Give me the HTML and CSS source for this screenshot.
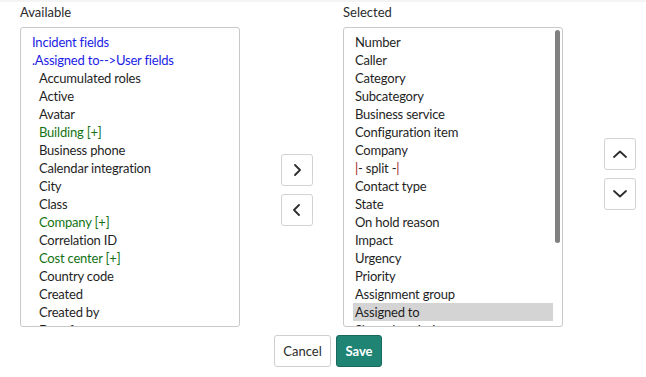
FILE: index.html
```html
<!DOCTYPE html>
<html lang="en">
<head>
  <meta charset="UTF-8" />
  <title>Configure List Layout</title>
  <link rel="stylesheet" href="styles.css">
</head>
<body>
  <div class="slush">
    <div class="columns">
      <!-- Available fields -->
      <div class="col">
        <label class="col-label">Available</label>
        <div class="list list-left">
          <div class="opt group">Incident fields</div>
          <div class="opt group">.Assigned to--&gt;User fields</div>
          <div class="opt sub">Accumulated roles</div>
          <div class="opt sub">Active</div>
          <div class="opt sub">Avatar</div>
          <div class="opt sub ref">Building [+]</div>
          <div class="opt sub">Business phone</div>
          <div class="opt sub">Calendar integration</div>
          <div class="opt sub">City</div>
          <div class="opt sub">Class</div>
          <div class="opt sub ref">Company [+]</div>
          <div class="opt sub">Correlation ID</div>
          <div class="opt sub ref">Cost center [+]</div>
          <div class="opt sub">Country code</div>
          <div class="opt sub">Created</div>
          <div class="opt sub">Created by</div>
          <div class="opt sub">Date format</div>
        </div>
      </div>

      <div class="mover">
        <button class="icon-btn" title="Add">
          <svg width="10" height="12" viewBox="0 0 10 12"><path d="M3 1 L8 6 L3 11" /></svg>
        </button>
        <button class="icon-btn" title="Remove">
          <svg width="10" height="12" viewBox="0 0 10 12"><path d="M7 1 L2 6 L7 11" /></svg>
        </button>
      </div>

      <!-- Selected fields -->
      <div class="col">
        <label class="col-label">Selected</label>
        <div class="list list-right">
          <div class="opt">Number</div>
          <div class="opt">Caller</div>
          <div class="opt">Category</div>
          <div class="opt">Subcategory</div>
          <div class="opt">Business service</div>
          <div class="opt">Configuration item</div>
          <div class="opt">Company</div>
          <div class="opt"><span class="pipe">|</span>- split -<span class="pipe">|</span></div>
          <div class="opt">Contact type</div>
          <div class="opt">State</div>
          <div class="opt">On hold reason</div>
          <div class="opt">Impact</div>
          <div class="opt">Urgency</div>
          <div class="opt">Priority</div>
          <div class="opt">Assignment group</div>
          <div class="opt selected">Assigned to</div>
          <div class="opt">Short description</div>
          <div class="scroll-thumb"></div>
        </div>
      </div>

      <div class="order">
        <button class="icon-btn" title="Move up">
          <svg width="14" height="8" viewBox="0 0 14 8"><path d="M1 7 L7 1.5 L13 7" /></svg>
        </button>
        <button class="icon-btn" title="Move down">
          <svg width="14" height="8" viewBox="0 0 14 8"><path d="M1 1 L7 6.5 L13 1" /></svg>
        </button>
      </div>
    </div>

    <div class="actions">
      <button class="btn btn-default">Cancel</button>
      <button class="btn btn-primary">Save</button>
    </div>
  </div>
</body>
</html>
```

FILE: styles.css
```css
* {
  margin: 0;
  padding: 0;
  box-sizing: border-box;
  font-family: 'Lato', 'Liberation Sans', sans-serif;
}
body {
  background: #fff;
  color: #1f1f1f;
  border-top: 2px solid #f4f4f4;
}
.slush {
  width: 616px;
  margin-left: 20px;
}
.columns {
  display: flex;
}
.col {
  width: 220px;
  display: flex;
  flex-direction: column;
}
.col-label {
  display: block;
  font-size: 13px;
  line-height: 20px;
  height: 20px;
  margin-bottom: 5px;
  color: #2b2b2b;
}
.list {
  position: relative;
  height: 300px;
  overflow: hidden;
  border: 1px solid #c9c9c9;
  border-radius: 3px;
  padding: 5px 9px 5px 9px;
  font-size: 13px;
  line-height: 18px;
  letter-spacing: -0.2px;
}
/* scrollbar thumb of the selected list */
.scroll-thumb {
  position: absolute;
  top: 2px;
  right: 2px;
  width: 5px;
  height: 213px;
  border-radius: 3px;
  background: #808080;
}
.opt {
  height: 18px;
  padding: 0 2px;
  white-space: nowrap;
  color: #1f1f1f;
}
.opt.group {
  color: #1c1ce6;
}
.opt.sub {
  padding-left: 9px;
}
.opt.ref {
  color: #137313;
}
.opt.selected {
  background: #d4d4d4;
}
.pipe {
  color: #a11a1a;
}
.mover {
  width: 32px;
  margin: 0 30px 0 41px;
  padding-top: 152px;
  display: flex;
  flex-direction: column;
  gap: 8px;
}
.order {
  width: 32px;
  margin-left: 41px;
  padding-top: 136px;
  display: flex;
  flex-direction: column;
  gap: 8px;
}
.icon-btn {
  width: 32px;
  height: 32px;
  background: #fff;
  border: 1px solid #d2d2d2;
  border-radius: 3px;
  display: flex;
  align-items: center;
  justify-content: center;
  cursor: pointer;
}
.icon-btn svg path {
  fill: none;
  stroke: #2d2d2d;
  stroke-width: 1.8;
  stroke-linecap: round;
  stroke-linejoin: round;
}
.actions {
  display: flex;
  justify-content: center;
  gap: 5px;
  margin-top: 8px;
}
.btn {
  height: 32px;
  font-size: 13px;
  border-radius: 3px;
  cursor: pointer;
}
.btn-default {
  width: 57px;
  background: #fff;
  color: #2b2b2b;
  border: 1px solid #cfcfcf;
}
.btn-primary {
  width: 46px;
  background: #1f8474;
  color: #fff;
  font-weight: 700;
  border: 1px solid #16695c;
}
```
